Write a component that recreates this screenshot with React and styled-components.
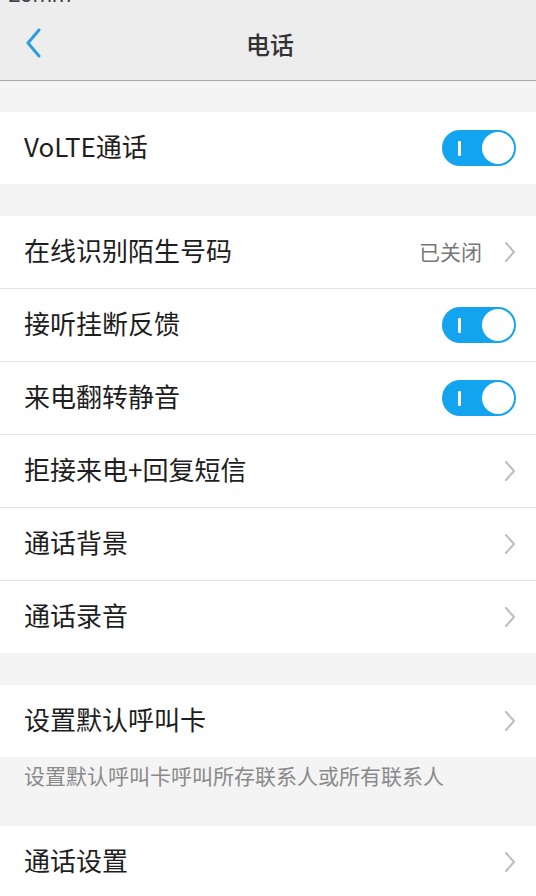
import styled, { createGlobalStyle } from "styled-components";

const GlobalStyle = createGlobalStyle`
  html, body {
    margin: 0;
    padding: 0;
    background: #f4f4f4;
  }
  body {
    font-family: "Noto Sans CJK SC", "Noto Sans", sans-serif;
    overflow: hidden;
  }
`;

const App = () => {
  return (
    <Page>
      <GlobalStyle />
      <Header>
        <StatusBar>
          <Clock>23mm</Clock>
        </StatusBar>
        <NavBar>
          <BackButton>
            <svg width="20" height="32" viewBox="0 0 20 32">
              <path
                d="M15 3 L4 16 L15 29"
                fill="none"
                stroke="#2a9fdc"
                strokeWidth="3"
                strokeLinecap="round"
                strokeLinejoin="round"
              />
            </svg>
          </BackButton>
          <Title>电话</Title>
        </NavBar>
      </Header>

      <Gap $h={31} />
      <Section>
        <Row>
          <Label>VoLTE通话</Label>
          <Toggle />
        </Row>
      </Section>

      <Gap $h={32} />
      <Section>
        <Row>
          <Label>在线识别陌生号码</Label>
          <Right>
            <Value>已关闭</Value>
            <Chevron />
          </Right>
        </Row>
        <Row>
          <Label>接听挂断反馈</Label>
          <Toggle />
        </Row>
        <Row>
          <Label>来电翻转静音</Label>
          <Toggle />
        </Row>
        <Row>
          <Label>拒接来电+回复短信</Label>
          <Chevron />
        </Row>
        <Row>
          <Label>通话背景</Label>
          <Chevron />
        </Row>
        <Row>
          <Label>通话录音</Label>
          <Chevron />
        </Row>
      </Section>

      <Gap $h={32} />
      <Section>
        <Row>
          <Label>设置默认呼叫卡</Label>
          <Chevron />
        </Row>
      </Section>
      <Hint>设置默认呼叫卡呼叫所存联系人或所有联系人</Hint>

      <Section>
        <Row>
          <Label>通话设置</Label>
          <Chevron />
        </Row>
      </Section>
    </Page>
  );
};

const Toggle = () => (
  <Switch>
    <SwitchMark />
    <Knob />
  </Switch>
);

const Chevron = () => (
  <ChevronBox>
    <svg width="12" height="22" viewBox="0 0 12 22">
      <path
        d="M2 2 L10 11 L2 20"
        fill="none"
        stroke="#bdbdbd"
        strokeWidth="2"
        strokeLinecap="round"
        strokeLinejoin="round"
      />
    </svg>
  </ChevronBox>
);

const Page = styled.div`
  width: 536px;
  height: 896px;
  overflow: hidden;
  background: #f4f4f4;
  display: flex;
  flex-direction: column;
`;

const Header = styled.div`
  background: #ededed;
  border-bottom: 1px solid #a9a9a9;
  height: 80px;
  flex-shrink: 0;
  display: flex;
  flex-direction: column;
`;

const StatusBar = styled.div`
  height: 6px;
  overflow: hidden;
  padding-left: 8px;
`;

const Clock = styled.div`
  font-family: "Roboto", "Liberation Sans", sans-serif;
  font-size: 22px;
  line-height: 22px;
  color: #444;
  margin-top: -16px;
`;

const NavBar = styled.div`
  position: relative;
  flex: 1;
  display: flex;
  align-items: center;
  justify-content: center;
`;

const BackButton = styled.div`
  position: absolute;
  left: 24px;
  top: 50%;
  transform: translateY(-50%);
  display: flex;
`;

const Title = styled.div`
  font-size: 24px;
  font-weight: 500;
  color: #333;
  margin-left: 4px;
`;

const Gap = styled.div`
  height: ${(p) => p.$h}px;
  flex-shrink: 0;
`;

const Section = styled.div`
  background: #fff;
  flex-shrink: 0;
`;

const Row = styled.div`
  height: 72px;
  display: flex;
  align-items: center;
  justify-content: space-between;
  padding: 0 20px 0 24px;
  box-sizing: border-box;

  & + & {
    height: 73px;
    border-top: 1px solid #e4e4e4;
  }
`;

const Label = styled.div`
  font-size: 26px;
  line-height: 32px;
  padding-bottom: 4px;
  color: #1e1e1e;
`;

const Right = styled.div`
  display: flex;
  align-items: center;
  gap: 22px;
`;

const Value = styled.div`
  font-size: 21px;
  line-height: 26px;
  padding-bottom: 3px;
  color: #777;
`;

const ChevronBox = styled.div`
  display: flex;
  align-items: center;
`;

const Switch = styled.div`
  width: 74px;
  height: 36px;
  border-radius: 18px;
  background: #13a4ef;
  display: flex;
  align-items: center;
  justify-content: space-between;
  padding: 0 2px 0 16px;
  box-sizing: border-box;
`;

const SwitchMark = styled.div`
  width: 3px;
  height: 15px;
  border-radius: 1px;
  background: #fff;
`;

const Knob = styled.div`
  width: 32px;
  height: 32px;
  border-radius: 50%;
  background: #fff;
`;

const Hint = styled.div`
  height: 69px;
  box-sizing: border-box;
  padding: 3px 0 0 24px;
  font-size: 21px;
  color: #8a8a8a;
  flex-shrink: 0;
`;

export default App;
